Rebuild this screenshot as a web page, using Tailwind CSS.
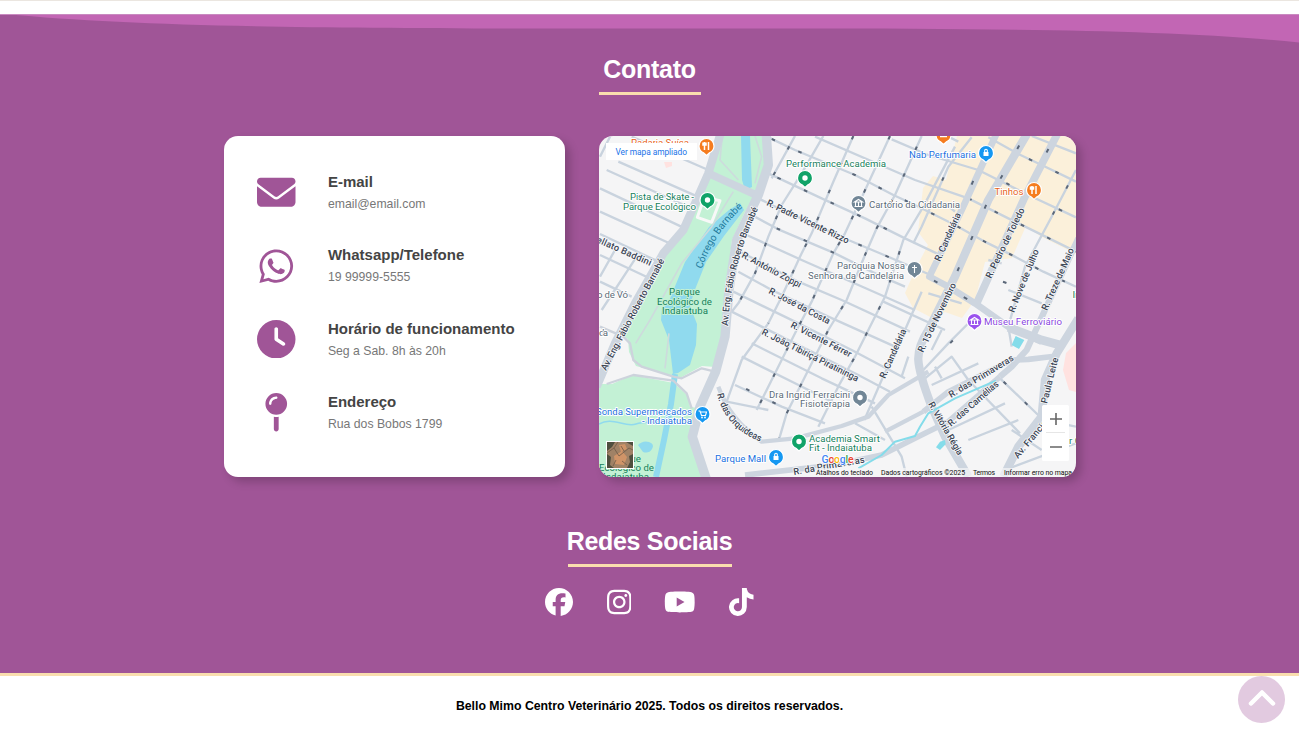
<!DOCTYPE html>
<html lang="pt-BR">
<head>
<meta charset="utf-8">
<title>Bello Mimo Centro Veterinário</title>
<script src="https://cdn.jsdelivr.net/npm/@tailwindcss/browser@4"></script>
</head>
<body class="flex h-[737px] flex-col overflow-hidden bg-white font-['Liberation_Sans',Arial,sans-serif]">
<div class="h-[14px] shrink-0 border-t border-[#ebe6e0] bg-white"></div>
<section class="relative flex h-[659px] shrink-0 flex-col items-center bg-[#a05597]">
  <svg class="absolute left-0 top-0 h-[30px] w-full" viewBox="0 0 1299 30" preserveAspectRatio="none"><path fill="#c266b4" d="M6 0C130 12 300 14.500 560 14.500L800 14.500C1000 15 1170 15 1299 28.500V0z"/><path fill="#c98ac0" d="M0 0h1299v1H0z"/></svg>
  <h2 class="relative mt-[39px] flex h-[42px] w-[102px] justify-center border-b-3 border-[#f9deae] text-[25px] leading-8 font-bold tracking-[-0.3px] text-white">Contato</h2>
  <div class="mt-[41px] flex w-[853px] justify-between pl-[0.500px]">
    <div class="flex h-[341px] w-[341px] flex-col gap-[35.300px] rounded-[14px] bg-white pt-[37.500px] pl-[33.900px] shadow-[5px_5px_10px_rgba(0,0,0,0.2)]">
      <div class="flex h-[38px] items-center gap-[32px]">
        <svg class="size-[38.500px]" viewBox="0 0 512 512" fill="#a05597"><path d="M48 64C21.500 64 0 85.500 0 112c0 15.100 7.100 29.300 19.200 38.400L236.800 313.600c11.400 8.500 27 8.500 38.400 0L492.800 150.400c12.100-9.100 19.200-23.300 19.200-38.400c0-26.500-21.500-48-48-48H48zM0 176V384c0 35.300 28.700 64 64 64H448c35.300 0 64-28.700 64-64V176L294.400 339.200c-22.800 17.100-54 17.100-76.800 0L0 176z"/></svg>
        <div><h3 class="text-[15px] leading-[18px] font-bold text-[#444]">E-mail</h3><p class="mt-[5px] text-[12.250px] leading-4 text-[#777]">email@email.com</p></div>
      </div>
      <div class="flex h-[38px] items-center gap-[32px]">
        <svg class="size-[38.500px]" viewBox="-32 0 512 512" fill="#a05597"><path d="M380.900 97.100C339 55.100 283.200 32 223.900 32c-122.400 0-222 99.600-222 222 0 39.100 10.200 77.300 29.600 111L0 480l117.700-30.900c32.400 17.700 68.900 27 106.100 27h.1c122.300 0 224.100-99.600 224.100-222 0-59.300-25.200-115-67.100-157zm-157 341.600c-33.200 0-65.700-8.900-94-25.700l-6.700-4-69.800 18.300L72 359.200l-4.400-7c-18.500-29.400-28.200-63.300-28.200-98.200 0-101.700 82.800-184.500 184.600-184.500 49.300 0 95.600 19.200 130.400 54.100 34.800 34.900 56.200 81.200 56.100 130.500 0 101.800-84.900 184.600-186.600 184.600zm101.200-138.200c-5.500-2.800-32.800-16.200-37.900-18-5.100-1.900-8.800-2.800-12.500 2.800-3.700 5.600-14.300 18-17.600 21.800-3.200 3.700-6.500 4.200-12 1.400-32.600-16.300-54-29.100-75.500-66-5.700-9.800 5.700-9.100 16.300-30.300 1.800-3.700.9-6.900-.5-9.700-1.400-2.800-12.500-30.100-17.100-41.200-4.500-10.800-9.100-9.300-12.500-9.500-3.200-.2-6.900-.2-10.600-.2-3.700 0-9.700 1.400-14.800 6.900-5.100 5.600-19.400 19-19.400 46.300 0 27.300 19.900 53.700 22.600 57.400 2.800 3.700 39.100 59.700 94.800 83.800 35.200 15.200 49 16.500 66.600 13.900 10.700-1.600 32.800-13.400 37.400-26.400 4.600-13 4.600-24.100 3.200-26.400-1.300-2.500-5-3.900-10.500-6.600z"/></svg>
        <div><h3 class="text-[15px] leading-[18px] font-bold text-[#444]">Whatsapp/Telefone</h3><p class="mt-[5px] text-[12.250px] leading-4 text-[#777]">19 99999-5555</p></div>
      </div>
      <div class="flex h-[38px] items-center gap-[32px]">
        <svg class="size-[38.500px]" viewBox="0 0 512 512" fill="#a05597"><path d="M256 0a256 256 0 1 1 0 512A256 256 0 1 1 256 0zM232 120V256c0 8 4 15.500 10.700 20l96 64c11 7.400 25.900 4.400 33.300-6.700s4.400-25.900-6.700-33.300L280 243.200V120c0-13.300-10.700-24-24-24s-24 10.700-24 24z"/></svg>
        <div><h3 class="text-[15px] leading-[18px] font-bold text-[#444]">Horário de funcionamento</h3><p class="mt-[5px] text-[12.250px] leading-4 text-[#777]">Seg a Sab. 8h às 20h</p></div>
      </div>
      <div class="flex h-[38px] items-center gap-[32px]">
        <svg class="size-[38.500px]" viewBox="-96 0 512 512" fill="#a05597"><path d="M16 144a144 144 0 1 1 288 0A144 144 0 1 1 16 144zM160 80c8.800 0 16-7.200 16-16s-7.200-16-16-16c-53 0-96 43-96 96c0 8.800 7.200 16 16 16s16-7.200 16-16c0-35.300 28.700-64 64-64zM128 480V317.100c10.400 1.900 21.100 2.900 32 2.900s21.600-1 32-2.900V480c0 17.700-14.300 32-32 32s-32-14.300-32-32z"/></svg>
        <div><h3 class="text-[15px] leading-[18px] font-bold text-[#444]">Endereço</h3><p class="mt-[5px] text-[12.250px] leading-4 text-[#777]">Rua dos Bobos 1799</p></div>
      </div>
    </div>
    <div class="h-[341px] w-[477px] overflow-hidden rounded-[14px] bg-[#f5f5f6] shadow-[5px_5px_10px_rgba(0,0,0,0.2)]">
<svg class="h-[341px] w-[477px]" viewBox="599 136 477 341" font-family="Roboto, sans-serif">
  <defs><path id="pino" d="M-7.500 0a7.500 7.500 0 1 1 15 0c0 3.500-2.200 5.800-4.500 6.800L0 9.500l-3-2.700c-2.300-1-4.500-3.300-4.500-6.800z"/></defs>
  <!-- land use -->
  <path fill="#fbf0da" d="M957 136H1076V254L1040 236 1026 226 1012 258 985 262 975 300 962 318 945 312 934 319 913 308 905 293 916 268 928 245 918 232 923 188 933 176 946 180z"/>
  <path fill="#ffe2e0" d="M1076 343L1066 353 1063 370 1069 390 1076 392zM664 162l8 0 0 4-6 2z"/>
  <path fill="#c3f1d5" d="M717 136H762L769 160 762 184 745 212 732 240 726 290 724 330 715 367 702 366 680 378 672 376 636 366 629 352 628 339 620 336 628 310 660 258 684 232 704 180z"/>
  <path fill="#c3f1d5" d="M599 384L612 384 632 375 674 383 688 396 690 407 699 408 691 430 694 450 706 477H599z"/>
  <path fill="#90daee" d="M741 136H750L752 187 745 190 742 180zM740 203L744 210 724 236 706 262 694 292 690 306 697 324 696 345 690 365 678 373 673 374 669 340 661 320 662 308 669 301 685 262 709 227 729 210z"/>
  <g fill="none" stroke="#90daee"><path stroke-width="6" d="M675 374L671 404 664 440 656 477"/><path stroke-width="1.500" d="M599 424C612 416 625 428 636 424S655 425 666 418"/></g>
  <path fill="#90daee" d="M638 445q5-5 11-3t3 7-9 3z"/>
  <g transform="translate(595 130) scale(.33333)" fill="none" stroke-linejoin="round">
    <g stroke="#cddbdc" stroke-width="5"><path d="M382 18L375 90 430 150M480 18L500 80 480 160M415 185L350 290 305 345 260 400 165 570 122 640M222 610L210 715"/></g>
    <path stroke="#cdd3dc" stroke-width="7" d="M15 590L85 620 105 640 115 690 140 710 235 740 260 745 320 715 360 725M35 762L115 735 235 752 275 790 290 835"/>
    <path fill="#c3f1d5" stroke="#f8f8f8" stroke-width="9" d="M328 202L375 212 350 277 307 262z"/>
    <!-- side streets -->
    <g stroke="#c9d3de" stroke-width="7">
      <path d="M45 20L15 80M110 20L340 120M70 95L320 205M35 120L300 240M15 175L270 295M15 245L235 345M15 312L190 395M15 375L175 450M125 380L20 540M15 455L110 500M60 360L15 440"/>
      <path d="M520 130L680 205 810 265 930 325 1025 370"/>
      <path d="M520 22L600 60 780 135 895 195 960 225 1080 285 1175 338 1260 380 1345 425 1443 470"/>
      <path d="M660 20L960 150 1120 205 1240 265 1443 365"/>
      <path d="M890 28L1000 75 1150 120 1300 195 1443 262"/>
      <path d="M1060 20L1090 35M1180 22L1270 72 1340 105 1443 155M1310 18L1443 70"/>
      <path d="M490 205L530 225 760 330 860 372 1000 432M470 255L550 298 720 370 860 440 930 470M455 315L620 390 960 540M435 365L610 455 740 510 945 605M865 515L1050 600"/>
      <path d="M430 425L530 480 700 560 900 650M415 485L600 575 770 660 930 745M410 545L500 590 790 735 885 785M470 640L680 745 840 820M440 680L600 760 740 830M420 765L560 830 690 880M395 815L520 840"/>
      <path d="M600 18L530 145M685 18L620 130 560 225 520 320 480 430 430 520 410 545M775 18L715 155 650 310 615 380 560 500 520 580 440 690 395 815M885 18L815 170 750 310 715 370 650 515 605 600 545 720 485 840"/>
      <path d="M980 18L900 195 845 295 810 375 755 510 700 600 640 720 575 850 553 925M1080 50L985 230 925 330 870 500 820 600 780 680 735 760 670 890M1130 22L1060 110 980 290 955 340M980 485L930 600 860 750 808 870M1443 120L1370 260 1290 410 1240 590 1250 650"/>
      <path d="M990 745L1070 680 1120 750 1275 910M1020 710L1040 745M1010 765L1150 700M1215 745L1345 870M985 720L1060 640 1130 570M1060 900L1230 820M1120 930L1270 870M830 830L920 980 935 1040M780 880L870 930M1000 490L1100 520M1010 660L1040 600M920 740L940 680M1250 900L1340 960M1345 870L1443 890M1240 480L1340 520M1230 1020L1443 940M1050 220L1080 245M1180 390L1220 400M1300 180L1330 160"/>
    </g>
    <g stroke="#5b6778" stroke-width="6" stroke-dasharray="11 77">
      <path stroke-dashoffset="-30" d="M520 130L680 205 810 265 930 325"/>
      <path stroke-dashoffset="-275" d="M520 22L600 60 780 135 895 195 960 225 1080 285 1175 338 1260 380 1345 425 1443 470"/>
      <path d="M1120 205L1240 265 1443 365M545 295L720 370M775 18L715 155 650 310 615 380 560 500 520 580M885 18L815 170 750 310 715 370 650 515 605 600 545 720 485 840M790 343L860 372 1000 432"/>
      <path stroke-dashoffset="-35" d="M980 18L900 195 845 295 810 375 755 510 700 600 640 720 575 850 553 925M925 330L870 500 820 600 780 680 735 760M600 18L530 145M560 225L520 320 480 430 430 520M1060 110L980 290M1435 135L1370 260M1203 143L1300 195 1443 262M1270 72L1340 105 1443 155"/>
      <path stroke-dashoffset="-15" d="M440 770L560 830M1215 745L1345 870M1055 650L1075 630M1210 450L1290 480"/>
    </g>
    <!-- avenues -->
    <g stroke="#cdd5df">
      <path stroke-width="25" d="M383 -10L340 130 265 300 205 370 120 520 60 640 5 770"/>
      <path stroke-width="23" d="M340 130L490 198"/>
      <path stroke-width="28" d="M513 0L520 105 490 195 425 330 402 480 390 620 362 725 315 830 292 920 335 1050"/>
      <path stroke-width="20" d="M1205 10L1100 240 1003 440 1060 470 1140 520 1240 590 1340 635"/>
      <path stroke-width="25" d="M1303 0L1180 210 1080 440 1000 600Q968 650 970 690T1010 830L1050 920 1120 1040"/>
      <path stroke-width="23" d="M1388 10L1290 200 1145 520"/>
      <path stroke-width="26" d="M1240 592L1340 630 1395 645"/>
      <path stroke-width="19" d="M1450 325L1350 540 1295 660 1250 710 1215 740"/>
      <path stroke-width="25" d="M1450 565L1385 670 1350 750 1340 860 1270 950 1225 1040"/>
      <path stroke-width="17" d="M1385 678L1300 688 1250 690 1060 785 985 845M1215 740L1060 875 990 910 860 975 720 1005 450 1035"/>
      <path stroke-width="13" d="M1000 725L880 795 820 860 740 888 600 925 500 935Q405 870 370 770M985 845L870 905"/>
    </g>
    <path stroke="#84dcea" stroke-width="6" d="M1203 752L1080 805 1000 850 975 890 960 918 900 935 860 975 790 1015"/>
    <path fill="#84dcea" d="M1262 618L1288 630 1272 657 1250 645zM1035 935L1050 930 1052 943 1035 960 1023 952z"/>
    <g stroke="#5b6778" stroke-width="6" stroke-dasharray="12 90"><path stroke-dashoffset="-25" d="M1285 25L1180 210 1080 440M1145 130L1100 230M1372 35L1340 95M995 440L1140 520"/></g>
  </g>
  <!-- street names -->
  <g font-size="9.300" font-weight="500" fill="#3c4655" stroke="#f8f9fb" stroke-width="1.600" paint-order="stroke" stroke-linejoin="round">
    <text transform="translate(766 205) rotate(25.500)" textLength="90">R. Padre Vicente Rizzo</text>
    <text transform="translate(741 257) rotate(28)" textLength="66">R. António Zoppi</text>
    <text transform="translate(768 293) rotate(27.500)" textLength="68">R. José da Costa</text>
    <text transform="translate(790 327) rotate(27)" textLength="67">R. Vicente Férrer</text>
    <text transform="translate(761 334) rotate(26.500)" textLength="107">R. João Tibiriçá Piratininga</text>
    <text transform="translate(596 242) rotate(24)" textLength="59">ellato Baddini</text>
    <text transform="translate(606 371) rotate(-62)" textLength="125">Av. Eng. Fábio Roberto Barnabé</text>
    <path id="avb" d="M728 326Q731 265 759 207" fill="none" stroke="none"/>
    <text><textPath href="#avb" textLength="122">Av. Eng. Fábio Roberto Barnabé</textPath></text>
    <text transform="translate(940 262) rotate(-66)" textLength="52">R. Candelária</text>
    <text transform="translate(885 379) rotate(-66)" textLength="53">R. Candelária</text>
    <text transform="translate(923 353) rotate(-64)" textLength="76">R. 15 de Novembro</text>
    <text transform="translate(991 279) rotate(-64)" textLength="77">R. Pedro de Toledo</text>
    <text transform="translate(1014 313) rotate(-68)" textLength="67">R. Nove de Julho</text>
    <text transform="translate(1047 311) rotate(-66)" textLength="67">R. Treze de Maio</text>
    <text transform="translate(951 398) rotate(-31)" textLength="74">R. das Primaveras</text>
    <text transform="translate(951 427) rotate(-41)" textLength="64">R. das Camélias</text>
    <text transform="translate(928 404) rotate(60)" textLength="60">R. Vitória Régia</text>
    <text transform="translate(1018 459) rotate(-50)" textLength="57">Av. Francisco</text>
    <text transform="translate(1047 404) rotate(-76)" textLength="47">Paula Leite</text>
    <text transform="translate(794 475) rotate(-10)" textLength="72">R. da  Primaveras</text>
    <path id="orq" d="M717 394Q726 432 770 445" fill="none" stroke="none"/>
    <text><textPath href="#orq" textLength="67">R. das Orquídeas</textPath></text>
  </g>
  <path id="cor" d="M702 269Q712 236 744 206" fill="none"/>
  <text font-size="10" fill="#237b9c"><textPath href="#cor" textLength="75">Córrego Barnabé</textPath></text>
  <!-- places -->
  <g font-size="9.700" stroke="#fff" stroke-width="1.800" paint-order="stroke" stroke-linejoin="round">
    <g fill="#5b6b78">
      <text x="597" y="298" textLength="31">o de Vó</text><text x="599" y="336" textLength="9">da</text>
      <text x="869" y="207.500" textLength="91">Cartório da Cidadania</text>
      <text x="837" y="269" textLength="68">Paróquia Nossa</text><text x="808" y="278.500" textLength="96">Senhora da Candelária</text>
      <text x="769" y="397.500" textLength="81">Dra Ingrid Ferracini</text><text x="800" y="407" textLength="50">Fisioterapia</text>
    </g>
    <g fill="#15805b">
      <text x="786" y="166.500" textLength="100">Performance Academia</text>
      <text x="630" y="200" textLength="64">Pista de Skate -</text><text x="623" y="209.500" textLength="73">Parque Ecológico</text>
      <text x="809" y="442" textLength="71">Academia Smart</text><text x="809" y="451" textLength="63">Fit - Indaiatuba</text>
      <g stroke="#c3f1d5"><text x="669" y="295" textLength="31">Parque</text><text x="657" y="304.500" textLength="55">Ecológico de</text><text x="662" y="314" textLength="46">Indaiatuba</text>
      <text x="610" y="461.500" textLength="31">Parque</text><text x="599" y="471" textLength="55">Ecológico de</text><text x="603" y="480" textLength="46">Indaiatuba</text></g>
      <text x="1072.500" y="298">In</text><text x="1069" y="444">r C</text>
    </g>
    <g fill="#1a6fe0">
      <text x="909" y="157.500" textLength="67">Nab Perfumaria</text>
      <text x="715" y="461.500" textLength="51">Parque Mall</text>
      <text x="596" y="414.500" textLength="96">Sonda Supermercados</text><text x="642" y="424" textLength="50">- Indaiatuba</text>
    </g>
    <g fill="#e8631a"><text x="631" y="146" textLength="58">Padaria Suíça</text><text x="994.500" y="194.500" textLength="29">Tinhos</text></g>
    <text x="984" y="325" fill="#8a45e0" textLength="78">Museu Ferroviário</text>
  </g>
  <!-- pins -->
  <g stroke="#fff" stroke-width="1.200">
    <g fill="#10a368"><use href="#pino" x="707.500" y="200"/><use href="#pino" x="805" y="178"/><use href="#pino" x="799" y="441.500"/></g>
    <g fill="#718696"><use href="#pino" x="858.500" y="203"/><use href="#pino" x="914.500" y="269"/><use href="#pino" x="860" y="397.500"/></g>
    <g fill="#1598f2"><use href="#pino" x="986" y="153"/><use href="#pino" x="776" y="457"/><use href="#pino" x="702.500" y="414"/></g>
    <g fill="#f57c1f"><use href="#pino" x="706.500" y="146"/><use href="#pino" x="1034" y="190"/><use href="#pino" x="943.500" y="135"/></g>
    <use href="#pino" x="974.500" y="321" fill="#9a52ee"/>
  </g>
  <g fill="#fff"><circle cx="707.500" cy="200" r="2.700"/><circle cx="805" cy="178" r="2.700"/><circle cx="799" cy="441.500" r="2.700"/><circle cx="860" cy="397.500" r="2.700"/>
    <path d="M983.500 152h5v4h-5zM773.500 456h5v4h-5z"/></g>
  <g fill="none" stroke="#fff" stroke-width="1.100">
    <path d="M984.700 152v-1.500a1.300 1.300 0 0 1 2.600 0V152M774.700 456v-1.500a1.300 1.300 0 0 1 2.600 0V456M914.500 265v8M912 267.500h5M854.500 202l4-2.500 4 2.500zM855.500 202.500v4M858.500 202.500v4M861.500 202.500v4M854.500 206.500h8M970.500 320l4-2.500 4 2.500zM971.500 320.500v4M974.500 320.500v4M977.500 320.500v4M970.500 324.500h8"/>
    <path stroke-width="1.500" d="M704.500 142v8M708.500 142v8M1032 186v8M1036 186v8M703 142.500v2.500h3v-2.500M1030.500 186.500v2.500h3v-2.500M940 136.500h7"/>
    <path d="M698.500 411h1.500l1.500 4.500h4l1-3.500h-6"/></g>
  <g fill="#fff"><circle cx="702" cy="417.500" r=".9"/><circle cx="705" cy="417.500" r=".9"/></g>
  <!-- satellite thumbnail -->
  <g><path fill="#fff" d="M606 441h28v28h-28z"/><path fill="#a08266" d="M607 442h26v26h-26z"/><path fill="#4f4f3f" d="M607 442h8l-3 5-5 4zM607 454l4 3-1 8 4 3h-7zM629 456l4-2v14h-6l3-6zM626 442h7v4z"/><path fill="#cf9468" d="M614 456l8-5 5 6-3 8-9-1zM619 445l6-1 2 5-6 3z"/><path fill="none" stroke="#6e5a48" stroke-width=".8" d="M607 453l7-5 4-6M614 448l5 8M619 456l10-8 4 2M613 466l3-6M622 461l5 4M624 451l-3-5"/></g>
  <!-- map controls -->
  <path fill="#fff" d="M606 143h91v17h-91z"/>
  <text x="615.500" y="154.500" font-size="8.400" fill="#1a73e8" textLength="71.500">Ver mapa ampliado</text>
  <rect x="1042" y="405" width="27" height="56" rx="1.500" fill="#fff"/><path stroke="#e6e6e6" d="M1046 432.500h19"/><path fill="none" stroke="#666" stroke-width="1.600" d="M1050 419h12M1056 413v12M1050 447h12"/>
  <path fill="#f5f5f6" opacity=".7" d="M815 468h261v9H815z"/>
  <g font-size="6.900" fill="#111"><text x="816" y="474.500" textLength="57">Atalhos do teclado</text><text x="881" y="474.500" textLength="84">Dados cartográficos ©2025</text><text x="973" y="474.500" textLength="22">Termos</text><text x="1004" y="474.500" textLength="68">Informar erro no mapa</text></g>
  <text x="821.500" y="462.500" font-size="10.500" font-weight="500" textLength="32" stroke="#fff" stroke-width="1.500" paint-order="stroke"><tspan fill="#4285f4">G</tspan><tspan fill="#ea4335">o</tspan><tspan fill="#fbbc04">o</tspan><tspan fill="#4285f4">g</tspan><tspan fill="#34a853">l</tspan><tspan fill="#ea4335">e</tspan></text>
</svg>
    </div>
  </div>
  <h2 class="mt-[48px] flex h-[42px] w-[164px] justify-center border-b-3 border-[#f9deae] text-[25px] leading-8 font-bold tracking-[-0.3px] whitespace-nowrap text-white">Redes Sociais</h2>
  <div class="mt-[21px] flex gap-[33.400px] fill-white">
    <svg class="h-7 w-7" viewBox="0 0 512 512"><path d="M512 256C512 114.600 397.400 0 256 0S0 114.600 0 256C0 376 82.700 476.800 194.200 504.500V334.200H141.400V256h52.800V222.300c0-87.100 39.400-127.500 125-127.500c16.200 0 44.200 3.200 55.700 6.400V172c-6-.6-16.500-1-29.600-1c-42 0-58.200 15.900-58.200 57.200V256h83.600l-14.400 78.200H287V510.100C413.800 494.800 512 386.900 512 256z"/></svg>
    <svg class="h-7 w-[24.500px]" viewBox="0 0 448 512"><path d="M224.100 141c-63.600 0-114.900 51.300-114.900 114.900s51.300 114.900 114.900 114.900S339 319.500 339 255.900 287.700 141 224.100 141zm0 189.600c-41.100 0-74.700-33.500-74.700-74.700s33.500-74.700 74.700-74.700 74.700 33.500 74.700 74.700-33.600 74.700-74.700 74.700zm146.400-194.300c0 14.900-12 26.800-26.800 26.800-14.900 0-26.800-12-26.800-26.800s12-26.800 26.800-26.800 26.800 12 26.800 26.800zm76.100 27.200c-1.700-35.900-9.900-67.700-36.200-93.900-26.200-26.200-58-34.400-93.900-36.200-37-2.100-147.900-2.100-184.900 0-35.800 1.700-67.600 9.900-93.900 36.100s-34.400 58-36.200 93.900c-2.100 37-2.100 147.900 0 184.900 1.700 35.900 9.900 67.700 36.200 93.900s58 34.400 93.900 36.200c37 2.100 147.900 2.100 184.900 0 35.900-1.700 67.700-9.900 93.900-36.200 26.200-26.200 34.400-58 36.200-93.900 2.100-37 2.100-147.800 0-184.800zM398.800 388c-7.800 19.600-22.900 34.700-42.600 42.600-29.500 11.700-99.500 9-132.100 9s-102.700 2.600-132.100-9c-19.600-7.800-34.700-22.900-42.600-42.600-11.700-29.500-9-99.500-9-132.100s-2.600-102.700 9-132.100c7.800-19.600 22.900-34.700 42.600-42.600 29.500-11.700 99.500-9 132.100-9s102.700-2.600 132.100 9c19.600 7.800 34.700 22.900 42.600 42.600 11.700 29.500 9 99.500 9 132.100s2.700 102.700-9 132.100z"/></svg>
    <svg class="h-7 w-[31.500px]" viewBox="0 0 576 512"><path d="M549.655 124.083c-6.281-23.650-24.787-42.276-48.284-48.597C458.781 64 288 64 288 64S117.220 64 74.629 75.486c-23.497 6.322-42.003 24.947-48.284 48.597-11.412 42.867-11.412 132.305-11.412 132.305s0 89.438 11.412 132.305c6.281 23.650 24.787 41.500 48.284 47.821C117.220 448 288 448 288 448s170.780 0 213.371-11.486c23.497-6.321 42.003-24.171 48.284-47.821 11.412-42.867 11.412-132.305 11.412-132.305s0-89.438-11.412-132.305zm-317.510 213.508V175.185l142.739 81.205-142.739 81.201z"/></svg>
    <svg class="h-7 w-[24.500px]" viewBox="0 0 448 512"><path d="M448 209.900a210.100 210.100 0 0 1-122.800-39.300V349.400A162.600 162.600 0 1 1 185 188.300V278.200a74.600 74.600 0 1 0 52.200 71.200V0l88 0a121.200 121.200 0 0 0 1.900 22.200h0A122.200 122.200 0 0 0 381 102.400a121.400 121.400 0 0 0 67 20.100z"/></svg>
  </div>
</section>
<footer class="flex flex-1 items-center justify-center border-t-3 border-[#f9deae] bg-white text-[12.300px] font-bold text-black">Bello Mimo Centro Veterinário 2025. Todos os direitos reservados.</footer>
<a class="fixed right-[14px] bottom-[14px] flex size-[47px] items-center justify-center rounded-full bg-[#e2cae0]"><svg class="size-[28px]" viewBox="0 0 28 28" fill="none" stroke="#fff" stroke-width="4.500" stroke-linecap="round" stroke-linejoin="round"><path d="M3 17.500L14 6.500 25 17.500"/></svg></a>
</body>
</html>
